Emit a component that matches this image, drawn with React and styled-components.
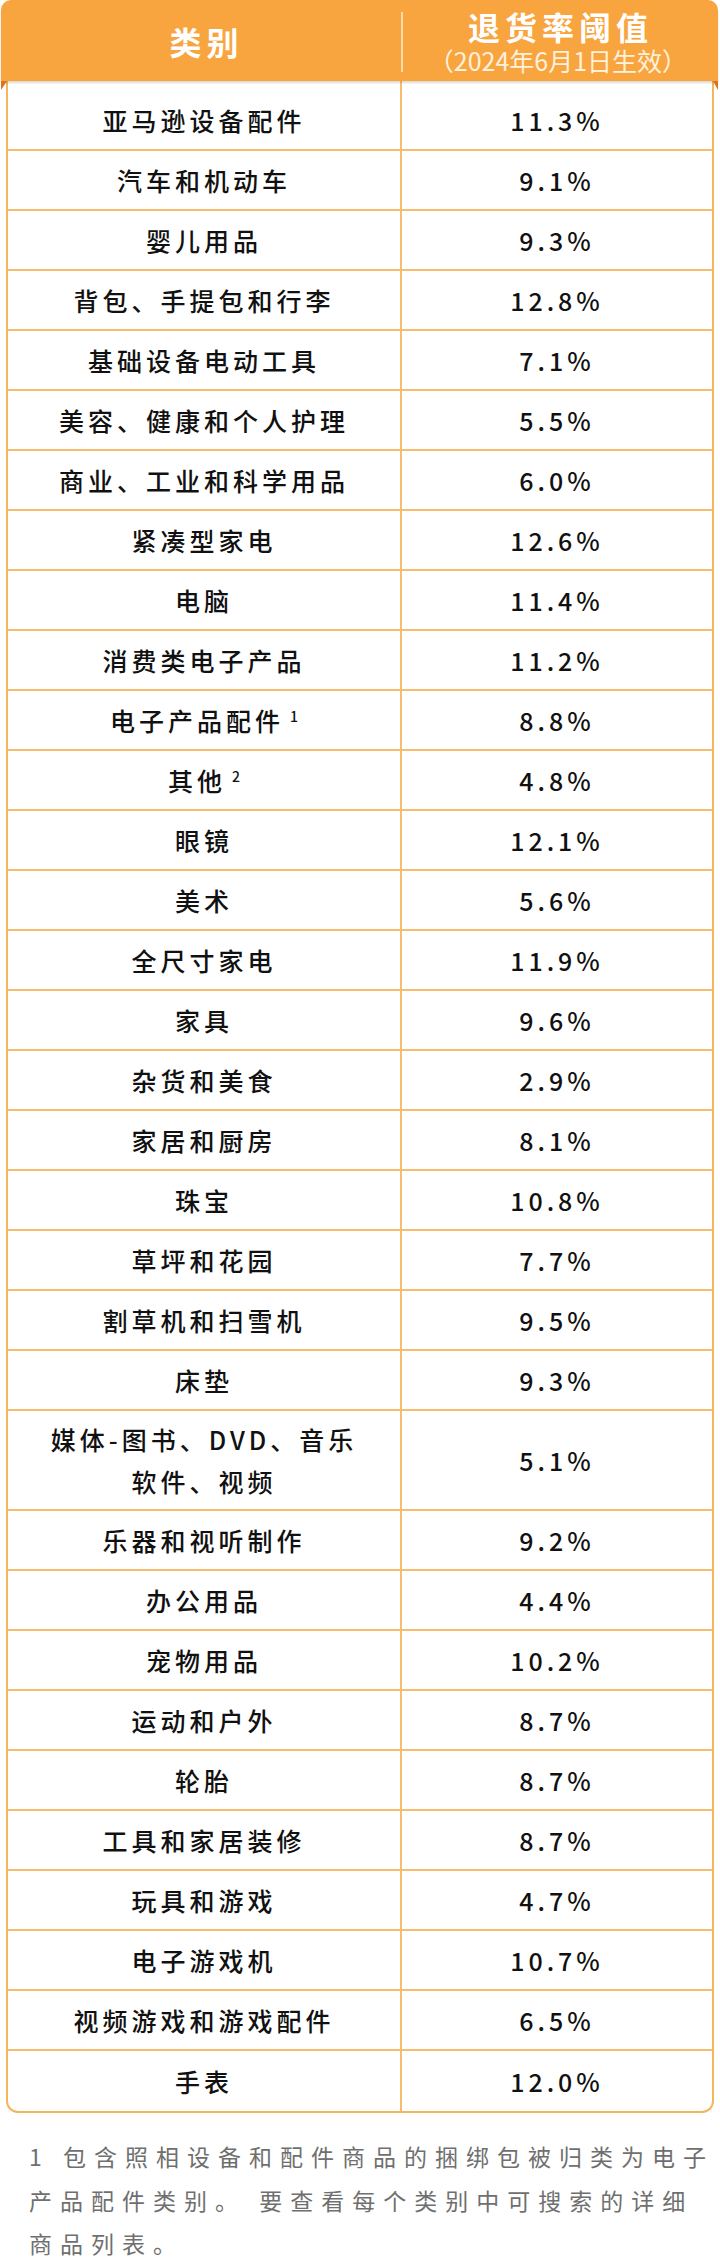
import React from 'react'
import styled, { createGlobalStyle } from 'styled-components'

const GlobalStyle = createGlobalStyle`
  html, body {
    margin: 0;
    padding: 0;
    background: #fff;
  }
  body {
    font-family: "Noto Sans CJK SC", "Noto Sans", sans-serif;
    -webkit-font-smoothing: antialiased;
  }
`

const ORANGE = '#f8a540'
const LINE = '#f6bd6e'

const rows = [
  ['亚马逊设备配件', '11.3%'],
  ['汽车和机动车', '9.1%'],
  ['婴儿用品', '9.3%'],
  ['背包、手提包和行李', '12.8%'],
  ['基础设备电动工具', '7.1%'],
  ['美容、健康和个人护理', '5.5%'],
  ['商业、工业和科学用品', '6.0%'],
  ['紧凑型家电', '12.6%'],
  ['电脑', '11.4%'],
  ['消费类电子产品', '11.2%'],
  ['电子产品配件', '8.8%', '1'],
  ['其他', '4.8%', '2'],
  ['眼镜', '12.1%'],
  ['美术', '5.6%'],
  ['全尺寸家电', '11.9%'],
  ['家具', '9.6%'],
  ['杂货和美食', '2.9%'],
  ['家居和厨房', '8.1%'],
  ['珠宝', '10.8%'],
  ['草坪和花园', '7.7%'],
  ['割草机和扫雪机', '9.5%'],
  ['床垫', '9.3%'],
  ['媒体-图书、DVD、音乐\n软件、视频', '5.1%'],
  ['乐器和视听制作', '9.2%'],
  ['办公用品', '4.4%'],
  ['宠物用品', '10.2%'],
  ['运动和户外', '8.7%'],
  ['轮胎', '8.7%'],
  ['工具和家居装修', '8.7%'],
  ['玩具和游戏', '4.7%'],
  ['电子游戏机', '10.7%'],
  ['视频游戏和游戏配件', '6.5%'],
  ['手表', '12.0%'],
]

const Page = styled.div`
  width: 720px;
`

const Header = styled.div`
  position: relative;
  z-index: 1;
  box-sizing: border-box;
  width: 717px;
  height: 81px;
  margin-left: 1px;
  padding: 0 4px 0 5px;
  display: grid;
  grid-template-columns: 396px 1fr;
  background: ${ORANGE};
  border-radius: 10px 10px 0 0;
  box-shadow: 0 2px 2px rgba(110, 80, 50, 0.22);
  color: #fff;

  /* little folds under both corners */
  &::before,
  &::after {
    content: '';
    position: absolute;
    top: 81px;
    width: 0;
    height: 0;
    border-top: 9px solid #d9741c;
  }
  &::before {
    left: 0;
    border-left: 6px solid transparent;
    transform: scaleX(-1);
  }
  &::after {
    right: 0;
    border-right: 5px solid transparent;
    transform: scaleX(-1);
  }
`

const HeadCell = styled.div`
  position: relative;
  display: flex;
  flex-direction: column;
  align-items: center;
  justify-content: center;

  ${p => p.divided && `
    &::before {
      content: '';
      position: absolute;
      left: -1px;
      top: 12px;
      bottom: 9px;
      width: 1.5px;
      background: rgba(255, 236, 205, 0.75);
    }
  `}
`

const HeadTitle = styled.div`
  font-size: 32px;
  font-weight: 700;
  line-height: 38px;
  letter-spacing: 5px;
  margin-right: -5px;
`

const HeadSub = styled.div`
  font-size: 25px;
  font-weight: 400;
  line-height: 30px;
  color: #fff1dc;
`

const Body = styled.div`
  margin: 0 6px;
  border: 2px solid #f4b55d;
  border-top: none;
  border-radius: 0 0 12px 12px;
  overflow: hidden;
  background: #fff;
`

const Row = styled.div`
  box-sizing: border-box;
  display: grid;
  grid-template-columns: 394px 1fr;
  height: ${p => p.$h}px;
  padding-top: ${p => p.$pad}px;
  border-bottom: 2px solid ${LINE};

  &:last-child {
    border-bottom: none;
  }
`

const Cell = styled.div`
  display: flex;
  align-items: center;
  justify-content: center;
  text-align: center;
  white-space: pre-line;
  font-size: 25px;
  font-weight: 500;
  line-height: 42px;
  letter-spacing: 4px;
  color: #111;
  ${p => p.$left && `border-right: 2px solid ${LINE}; margin-top: -${p.$pad}px; padding-top: ${p.$pad}px;`}
`

const Sup = styled.sup`
  font-size: 14px;
  font-weight: 500;
  line-height: 0;
  letter-spacing: 0;
  margin-left: 6px;
  vertical-align: 9px;
`

const Note = styled.p`
  margin: 0;
  padding: 22px 2px 0 29px;
  font-size: 23px;
  font-weight: 400;
  line-height: 43.5px;
  letter-spacing: 8px;
  color: #6f6f6f;
`

function rowHeight(i, label) {
  if (i === 0) return 70
  if (label.includes('\n')) return 100
  return 60
}

export default function App() {
  return (
    <Page>
      <GlobalStyle />
      <Header>
        <HeadCell>
          <HeadTitle>类别</HeadTitle>
        </HeadCell>
        <HeadCell divided>
          <HeadTitle>退货率阈值</HeadTitle>
          <HeadSub>（2024年6月1日生效）</HeadSub>
        </HeadCell>
      </Header>
      <Body>
        {rows.map(([label, rate, note], i) => {
          const pad = i === 0 ? 10 : 0
          return (
            <Row key={label} $h={rowHeight(i, label)} $pad={pad}>
              <Cell $left $pad={pad}>
                <span>
                  {label}
                  {note && <Sup>{note}</Sup>}
                </span>
              </Cell>
              <Cell>{rate}</Cell>
            </Row>
          )
        })}
      </Body>
      <Note>
        1 包含照相设备和配件商品的捆绑包被归类为电子产品配件类别。 要查看每个类别中可搜索的详细商品列表。
      </Note>
    </Page>
  )
}
